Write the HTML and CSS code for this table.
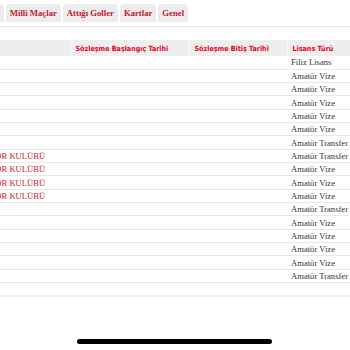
FILE: index.html
```html
<!DOCTYPE html>
<html lang="tr">
<head>
<meta charset="utf-8">
<title>Kulüpler</title>
<link rel="stylesheet" href="styles.css">
</head>
<body>
<div class="viewport">
  <div class="tabs">
    <a class="tab">Kulüpler</a>
    <a class="tab">Milli Maçlar</a>
    <a class="tab">Attığı Goller</a>
    <a class="tab">Kartlar</a>
    <a class="tab">Genel</a>
  </div>
  <div class="table-wrap">
    <table class="grid">
      <colgroup>
        <col class="c1"><col class="c2"><col class="c3"><col class="c4">
      </colgroup>
      <thead>
        <tr><th>Kulüp</th><th>Sözleşme Başlangıç Tarihi</th><th>Sözleşme Bitiş Tarihi</th><th>Lisans Türü</th></tr>
      </thead>
      <tbody>
        <tr><td></td><td></td><td></td><td>Filiz Lisans</td></tr>
        <tr><td></td><td></td><td></td><td>Amatör Vize</td></tr>
        <tr><td></td><td></td><td></td><td>Amatör Vize</td></tr>
        <tr><td></td><td></td><td></td><td>Amatör Vize</td></tr>
        <tr><td></td><td></td><td></td><td>Amatör Vize</td></tr>
        <tr><td></td><td></td><td></td><td>Amatör Vize</td></tr>
        <tr><td></td><td></td><td></td><td>Amatör Transfer</td></tr>
        <tr><td class="club">ÇAYKUR RİZESPOR KULÜBÜ</td><td></td><td></td><td>Amatör Transfer</td></tr>
        <tr><td class="club">ÇAYKUR RİZESPOR KULÜBÜ</td><td></td><td></td><td>Amatör Vize</td></tr>
        <tr><td class="club">ÇAYKUR RİZESPOR KULÜBÜ</td><td></td><td></td><td>Amatör Vize</td></tr>
        <tr><td class="club">ÇAYKUR RİZESPOR KULÜBÜ</td><td></td><td></td><td>Amatör Vize</td></tr>
        <tr><td></td><td></td><td></td><td>Amatör Transfer</td></tr>
        <tr><td></td><td></td><td></td><td>Amatör Vize</td></tr>
        <tr><td></td><td></td><td></td><td>Amatör Vize</td></tr>
        <tr><td></td><td></td><td></td><td>Amatör Vize</td></tr>
        <tr><td></td><td></td><td></td><td>Amatör Vize</td></tr>
        <tr><td></td><td></td><td></td><td>Amatör Transfer</td></tr>
      </tbody>
    </table>
  </div>
  <div class="footer-line"></div>
</div>
<div class="home-indicator"></div>
</body>
</html>
```
FILE: styles.css
```css
html, body {
  margin: 0;
  padding: 0;
  background: #ffffff;
  overflow: hidden;
}
.viewport {
  width: 350px;
  height: 350px;
  overflow: hidden;
}
.tabs {
  display: flex;
  gap: 2px;
  margin-left: -38px;
  padding-top: 4px;
  padding-bottom: 4px;
  border-bottom: 1px solid #e6e6e6;
  white-space: nowrap;
}
.tab {
  display: block;
  height: 18px;
  line-height: 19px;
  padding: 0 4px;
  background: #ececec;
  border-radius: 4px 4px 0 0;
  font-family: "Liberation Serif", "Times New Roman", serif;
  font-weight: bold;
  font-size: 8.7px;
  color: #c0172f;
}
.table-wrap {
  margin-top: 13px;
  margin-left: -75px;
}
.grid {
  border-collapse: collapse;
  table-layout: fixed;
  width: 495px;
}
.c1 { width: 145px; }
.c2 { width: 119px; }
.c3 { width: 98px; }
.c4 { width: 133px; }
.grid th {
  height: 16px;
  padding: 0 5px;
  background: #eeeeee;
  border-left: 1px solid #fafafa;
  text-align: left;
  font-family: "DejaVu Sans Condensed", "DejaVu Sans", sans-serif;
  font-weight: bold;
  font-size: 7.1px;
  color: #e3001b;
  white-space: nowrap;
}
.grid th:first-child { border-left: none; }
.grid td {
  height: 13.33px;
  box-sizing: border-box;
  padding: 1px 4px 0;
  border-bottom: 1px solid #e8e8e8;
  font-family: "Liberation Serif", "Times New Roman", serif;
  font-size: 8.6px;
  line-height: 11px;
  color: #333333;
  white-space: nowrap;
  overflow: hidden;
}
.grid td.club {
  color: #c8142f;
}
.footer-line {
  margin-top: 12px;
  height: 2px;
  background: #eeeeee;
}
.home-indicator {
  position: absolute;
  left: 77px;
  top: 339px;
  width: 195px;
  height: 5px;
  border-radius: 3px;
  background: #000000;
}
```
